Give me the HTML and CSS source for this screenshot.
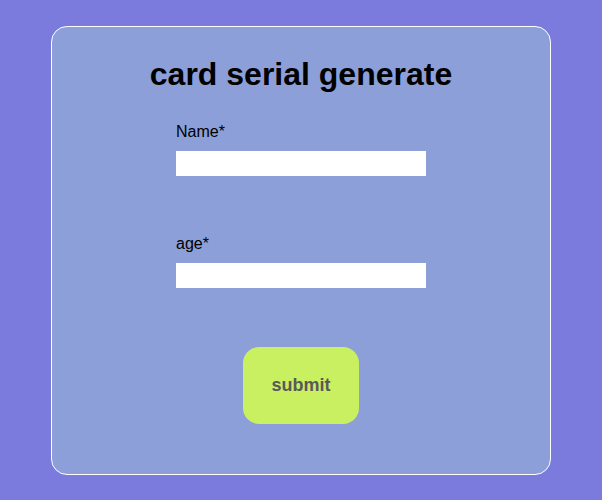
FILE: index.html
```html
<!DOCTYPE html>
<html>
<head>
<meta charset="utf-8">
<link rel="stylesheet" href="styles.css">
</head>
<body>
<div class="card">
  <h1 class="title">card serial generate</h1>
  <form class="form">
    <label class="label first" for="name">Name*</label>
    <input class="input" id="name" type="text">
    <label class="label second" for="age">age*</label>
    <input class="input" id="age" type="text">
    <button class="submit" type="button">submit</button>
  </form>
</div>
</body>
</html>
```
FILE: styles.css
```css
html, body {
  margin: 0;
  padding: 0;
  background: #7b7bde;
  font-family: "Liberation Sans", Arial, sans-serif;
}
body {
  padding-top: 26px;
  height: 500px;
  box-sizing: border-box;
}
.card {
  box-sizing: border-box;
  width: 500px;
  height: 449px;
  margin: 0 auto;
  border: 1px solid #ffffff;
  border-radius: 16px;
  background: #8c9fd8;
  display: flex;
  flex-direction: column;
  align-items: center;
}
.title {
  margin: 29px 0 0;
  font-size: 32px;
  line-height: 37px;
  font-weight: bold;
  color: #000;
  text-align: center;
}
.form {
  width: 250px;
  display: flex;
  flex-direction: column;
}
.label {
  display: block;
  font-size: 16px;
  line-height: 18px;
  color: #000;
}
.label.first { margin-top: 30px; }
.label.second { margin-top: 59px; }
.input {
  margin: 10px 0 0;
  height: 25px;
  width: 250px;
  box-sizing: border-box;
  border: none;
  padding: 0 4px;
  background: #ffffff;
  outline: none;
}
.submit {
  align-self: center;
  margin-top: 59px;
  width: 116px;
  height: 77px;
  border: none;
  border-radius: 16px;
  background: #c9f060;
  color: #595959;
  font-family: "Liberation Sans", Arial, sans-serif;
  font-size: 18px;
  font-weight: bold;
  padding: 0;
}
```
